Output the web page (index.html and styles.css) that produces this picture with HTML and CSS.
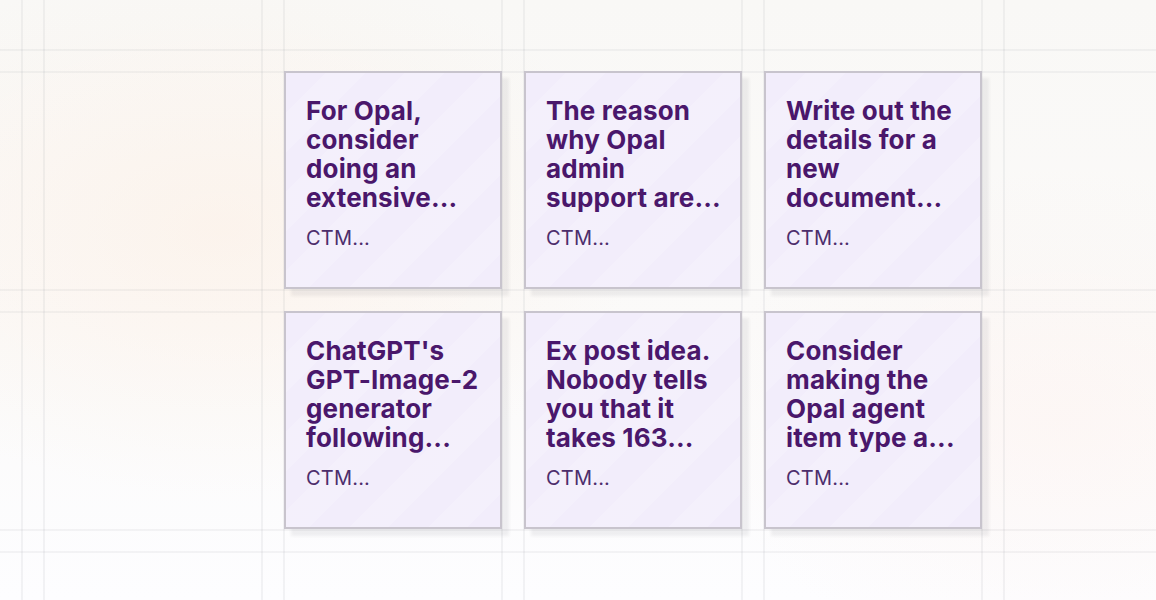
FILE: index.html
```html
<!DOCTYPE html>
<html lang="en">
<head>
<meta charset="utf-8">
<title>Board</title>
<link rel="stylesheet" href="styles.css">
</head>
<body>
<main class="board">
  <div class="grid">
    <article class="card">
      <h2 class="title">For Opal, consider doing an extensive...</h2>
      <p class="meta">CTM...</p>
    </article>
    <article class="card">
      <h2 class="title">The reason why Opal admin support&nbsp;are...</h2>
      <p class="meta">CTM...</p>
    </article>
    <article class="card">
      <h2 class="title">Write out the details for a new document...</h2>
      <p class="meta">CTM...</p>
    </article>
    <article class="card">
      <h2 class="title">ChatGPT's GPT-Image-2 generator following...</h2>
      <p class="meta">CTM...</p>
    </article>
    <article class="card">
      <h2 class="title">Ex post idea. Nobody tells you that it takes&nbsp;163...</h2>
      <p class="meta">CTM...</p>
    </article>
    <article class="card">
      <h2 class="title">Consider making the Opal agent item&nbsp;type&nbsp;a...</h2>
      <p class="meta">CTM...</p>
    </article>
  </div>
</main>
</body>
</html>
```

FILE: styles.css
```css
html, body {
  margin: 0;
  height: 100%;
}

body {
  font-family: Inter, "Noto Sans", sans-serif;
  background-color: #fcfbfa;
  background-image:
    linear-gradient(90deg, rgba(120, 125, 135, 0.085) 0 2px, transparent 2px),
    linear-gradient(90deg, rgba(120, 125, 135, 0.085) 0 2px, transparent 2px),
    linear-gradient(180deg, rgba(120, 120, 130, 0.075) 0 2px, transparent 2px),
    linear-gradient(180deg, rgba(120, 120, 130, 0.075) 0 2px, transparent 2px),
    radial-gradient(ellipse 600px 380px at 220px 230px, rgba(255, 232, 214, 0.35), transparent 70%),
    radial-gradient(ellipse 500px 360px at 1060px 420px, rgba(255, 236, 230, 0.3), transparent 70%),
    linear-gradient(180deg, #f9f8f6 0%, #fbfaf9 55%, #fdfdff 100%);
  background-size:
    240px 100%,
    240px 100%,
    100% 240px,
    100% 240px,
    100% 100%,
    100% 100%,
    100% 100%;
  background-position:
    21px 0,
    43px 0,
    0 49px,
    0 71px,
    0 0,
    0 0,
    0 0;
  background-repeat: repeat-x, repeat-x, repeat-y, repeat-y, no-repeat, no-repeat, no-repeat;
}

.board {
  padding: 71px 0 0 284px;
}

.grid {
  display: grid;
  grid-template-columns: repeat(3, 218px);
  grid-auto-rows: 218px;
  gap: 22px;
}

.card {
  box-sizing: border-box;
  border: 2px solid #c8c4cd;
  background-color: #f2edfb;
  background-image: repeating-linear-gradient(135deg, rgba(255, 255, 255, 0) 0 28px, rgba(255, 255, 255, 0.18) 28px 56px);
  box-shadow: 7px 7px 3px rgba(60, 60, 70, 0.07);
  padding: 23px 16px 20px 20px;
  display: flex;
  flex-direction: column;
}

.title {
  margin: 0;
  font-size: 26px;
  line-height: 29px;
  font-weight: 700;
  letter-spacing: 0.15px;
  color: #4a176b;
}

.meta {
  margin: 14px 0 0;
  font-size: 20px;
  line-height: 24px;
  font-weight: 400;
  letter-spacing: 0.2px;
  color: #4d2e6c;
}
```
